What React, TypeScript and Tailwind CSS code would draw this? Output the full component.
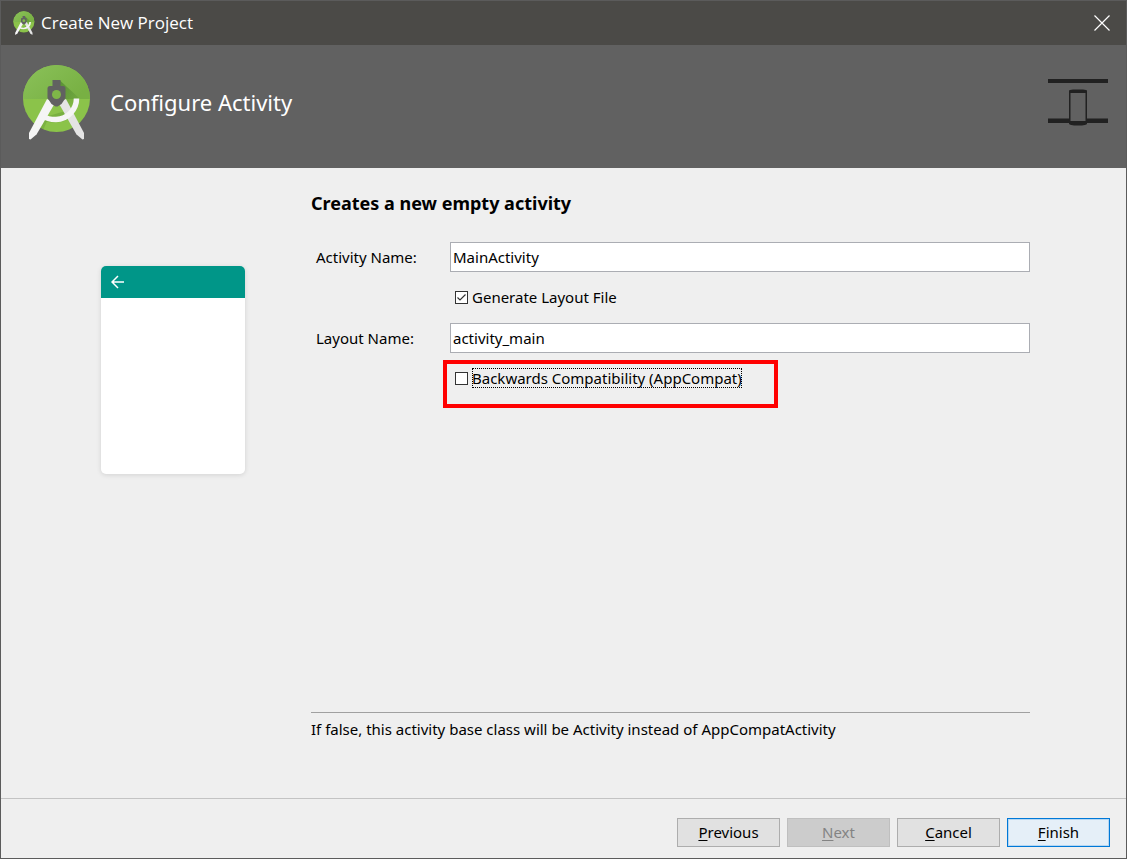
import { useId, useState } from "react";
import type { ReactNode } from "react";

// ─── Icons ────────────────────────────────────────────────────────────────────

function StudioLogo({ className }: { className: string }) {
  const id = useId();
  return (
    <svg viewBox="12 9 70 76" className={className} aria-hidden="true">
      <defs>
        <linearGradient id={`${id}-top`} x1="0" y1="0" x2="1" y2="0.6">
          <stop offset="0" stopColor="#8bc25a" />
          <stop offset="1" stopColor="#78b043" />
        </linearGradient>
        <linearGradient id={`${id}-shade`} x1="0" y1="0" x2="1" y2="1">
          <stop offset="0" stopColor="#33691e" stopOpacity="0.5" />
          <stop offset="1" stopColor="#33691e" stopOpacity="0" />
        </linearGradient>
        <clipPath id={`${id}-disc`}>
          <circle cx="46.5" cy="43.5" r="33.5" />
        </clipPath>
      </defs>
      <circle cx="46.5" cy="43.5" r="33.5" fill="#8bc34a" />
      <g clipPath={`url(#${id}-disc)`}>
        <rect x="12" y="9" width="70" height="35" fill={`url(#${id}-top)`} />
        <path d="M50 25.500L70 44L60 54L50 45Z" fill={`url(#${id}-shade)`} />
        <path d="M34 66Q52 71 64 60L59 55L35 62Z" fill="#558b2f" opacity="0.35" />
        <path d="M32 66L28 75L32 78L37 66Z" fill="#558b2f" opacity="0.3" />
      </g>
      {/* legs */}
      <path d="M48 47L56 44L74 78V84L72.500 84.500L66.500 79.500Z" fill="#e4e4e4" />
      <path d="M37 44L45 48L26.500 79.500L20.500 84.500L19 84V78Z" fill="#f5f5f5" />
      {/* hub */}
      <path
        fill="#616161"
        d="M42.500 25H50.500V31H53Q55.500 31 55.500 33.500V43L51.500 49L47.500 51.500H45.500L41.500 49L37.500 43V33.500Q37.500 31 40 31H42.500Z"
      />
      <circle cx="46.500" cy="39.500" r="4.500" fill="#7fb648" />
      {/* arc */}
      <path d="M66.500 43.500C66.500 54 58 64.500 46 64.500C41 64.500 36 63.500 33 61" fill="none" stroke="#f5f5f5" strokeWidth="5.500" />
    </svg>
  );
}

function FormFactorIcon() {
  return (
    <svg viewBox="0 0 60 47" className="h-[47px] w-[60px] shrink-0" aria-hidden="true">
      <path d="M0 0H60V4H0ZM0 39.500H60V44H0Z" fill="#212121" />
      <path d="M21 12Q21 10.500 25 10.500H35Q39 10.500 39 12V44.500Q39 46.500 30 46.500Q21 46.500 21 44.500Z" fill="#212121" />
      <rect x="22.500" y="14" width="15" height="28" fill="#616161" />
    </svg>
  );
}

// ─── Form parts ───────────────────────────────────────────────────────────────

function Field({ label, value, onChange }: { label: string; value: string; onChange: (v: string) => void }) {
  const id = useId();
  return (
    <div className="flex items-center">
      <label htmlFor={id} className="w-[139px] shrink-0 pb-px pl-[5px]">{label}</label>
      <input
        id={id}
        type="text"
        value={value}
        onChange={e => onChange(e.target.value)}
        className="h-[30px] min-w-0 flex-1 border border-[#abadb3] bg-white px-[2px] pb-px outline-none"
      />
    </div>
  );
}

function Check({ checked, onChange, focused, children }: {
  checked: boolean; onChange: (v: boolean) => void; focused?: boolean; children: ReactNode;
}) {
  return (
    <label className="flex h-[31px] w-fit items-center gap-1 pb-px">
      <span className="grid">
        <input
          type="checkbox"
          checked={checked}
          onChange={e => onChange(e.target.checked)}
          className="peer col-start-1 row-start-1 size-[13px] appearance-none border border-[#333333] bg-white outline-none"
        />
        <svg viewBox="0 0 13 13" className="pointer-events-none invisible col-start-1 row-start-1 size-[13px] peer-checked:visible" aria-hidden="true">
          <path d="M2.500 6.500L5 9L10.500 3.500" fill="none" stroke="#333333" strokeWidth="1.200" />
        </svg>
      </span>
      <span className={focused ? "leading-5 outline-1 -outline-offset-1 outline-dotted outline-black" : "leading-5"}>
        {children}
      </span>
    </label>
  );
}

const BTN = "h-[29px] w-[103px] border pb-0.5";
const BTN_VARIANTS = {
  normal: "border-[#adadad] bg-[#e1e1e1]",
  disabled: "border-[#bfbfbf] bg-[#cccccc] text-[#838383]",
  primary: "border-[#0078d7] bg-[#e5eff8] inset-ring inset-ring-[#b5d7f3]",
};

function DialogButton({ text, variant = "normal" }: { text: string; variant?: keyof typeof BTN_VARIANTS }) {
  return (
    <button type="button" disabled={variant === "disabled"} className={`${BTN} ${BTN_VARIANTS[variant]}`}>
      <span className="underline underline-offset-2">{text[0]}</span>{text.slice(1)}
    </button>
  );
}

// ─── Main ─────────────────────────────────────────────────────────────────────

export default function App() {
  const [activity, setActivity] = useState("MainActivity");
  const [layout,   setLayout]   = useState("activity_main");
  const [generate, setGenerate] = useState(true);
  const [compat,   setCompat]   = useState(false);

  return (
    <div className="flex min-h-screen flex-col border border-[#5b5b5b] bg-[#efefef] font-['Noto_Sans',sans-serif] text-[15px] leading-5 text-black">
      <div className="flex h-11 items-center bg-[#4b4a47] pr-4 pl-3 text-white">
        <StudioLogo className="h-6 w-[22px]" />
        <span className="ml-1.5 flex-1 font-['Open_Sans',sans-serif] text-[17px]">Create New Project</span>
        <button type="button" aria-label="Close">
          <svg viewBox="0 0 16 16" className="size-4" aria-hidden="true">
            <path d="M0.500 0.500L15.500 15.500M15.500 0.500L0.500 15.500" fill="none" stroke="#ffffff" strokeWidth="1.200" />
          </svg>
        </button>
      </div>

      <header className="flex items-center bg-[#616161] pt-[19px] pr-[18px] pb-7 pl-[21px] text-white">
        <StudioLogo className="h-[76px] w-[70px] shrink-0" />
        <h1 className="ml-[18px] flex-1 text-[22px] leading-8">Configure Activity</h1>
        <FormFactorIcon />
      </header>

      <main className="flex flex-1">
        <div className="w-[310px] shrink-0 pt-[98px] pl-[100px]">
          <div className="h-52 w-36 overflow-hidden rounded-[5px] bg-white shadow-[0_1px_5px_rgba(0,0,0,0.12)]">
            <div className="flex h-8 items-center bg-[#009688] pl-2.5">
              <svg viewBox="0 0 14 14" className="size-3.5" aria-hidden="true">
                <path d="M13 7H1.500M7 1L1 7L7 13" fill="none" stroke="#ffffff" strokeWidth="1.500" />
              </svg>
            </div>
          </div>
        </div>

        <form className="mr-24 flex min-w-0 flex-1 flex-col pt-[23px] pb-[59px]">
          <h2 className="mb-[27px] text-[18px] leading-6 font-bold">Creates a new empty activity</h2>
          <div className="flex flex-col gap-2.5">
            <Field label="Activity Name:" value={activity} onChange={setActivity} />
            <div className="pl-36">
              <Check checked={generate} onChange={setGenerate}>Generate Layout File</Check>
            </div>
            <Field label="Layout Name:" value={layout} onChange={setLayout} />
            <div className="relative pl-36">
              <Check checked={compat} onChange={setCompat} focused>Backwards Compatibility (AppCompat)</Check>
              <div className="pointer-events-none absolute -top-[3px] left-[132px] h-12 w-[335px] border-4 border-[#ff0000]" />
            </div>
          </div>
          <p className="mt-auto border-t border-[#a0a0a0] pt-1.5">
            If false, this activity base class will be Activity instead of AppCompatActivity
          </p>
        </form>
      </main>

      <footer className="flex justify-end gap-[7px] border-t border-[#c3c3c3] pt-[19px] pr-4 pb-[11px]">
        <DialogButton text="Previous" />
        <DialogButton text="Next" variant="disabled" />
        <DialogButton text="Cancel" />
        <DialogButton text="Finish" variant="primary" />
      </footer>
    </div>
  );
}
